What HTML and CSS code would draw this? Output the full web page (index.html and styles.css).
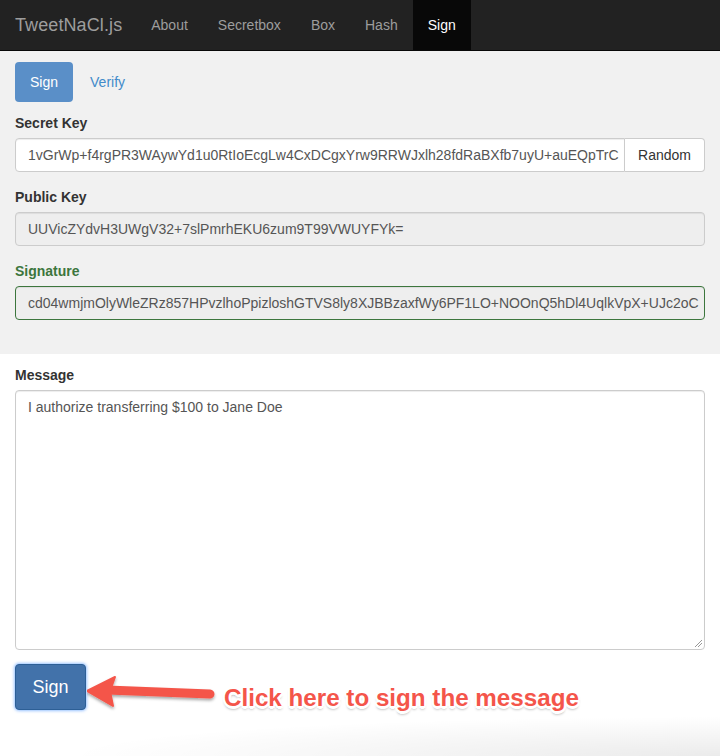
FILE: index.html
```html
<!DOCTYPE html>
<html>
<head>
<meta charset="utf-8">
<title>TweetNaCl.js</title>
<link rel="stylesheet" href="styles.css">
</head>
<body>
<nav class="navbar">
  <a class="brand">TweetNaCl.js</a>
  <ul class="nav">
    <li><a>About</a></li>
    <li><a>Secretbox</a></li>
    <li><a>Box</a></li>
    <li><a>Hash</a></li>
    <li class="active"><a>Sign</a></li>
  </ul>
</nav>
<section class="keys">
  <ul class="pills">
    <li class="active"><a>Sign</a></li>
    <li><a>Verify</a></li>
  </ul>
  <div class="group">
    <label>Secret Key</label>
    <div class="input-group">
      <div class="control">1vGrWp+f4rgPR3WAywYd1u0RtIoEcgLw4CxDCgxYrw9RRWJxlh28fdRaBXfb7uyU+auEQpTrC</div>
      <span class="addon">Random</span>
    </div>
  </div>
  <div class="group">
    <label>Public Key</label>
    <div class="control readonly">UUVicZYdvH3UWgV32+7slPmrhEKU6zum9T99VWUYFYk=</div>
  </div>
  <div class="group success">
    <label>Signature</label>
    <div class="control readonly">cd04wmjmOlyWleZRz857HPvzlhoPpizloshGTVS8ly8XJBBzaxfWy6PF1LO+NOOnQ5hDl4UqlkVpX+UJc2oC</div>
  </div>
</section>
<section class="message">
  <label>Message</label>
  <div class="textarea">I authorize transferring $100 to Jane Doe<svg class="grip" width="9" height="9" viewBox="0 0 9 9"><path d="M1 8 L8 1 M4 8 L8 4" stroke="#999" stroke-width="1" fill="none"/></svg></div>
  <div class="actions">
    <button class="btn-sign">Sign</button>
    <svg class="arrow" width="140" height="50" viewBox="0 0 140 50">
      <defs>
        <filter id="sh" x="-20%" y="-40%" width="140%" height="180%">
          <feDropShadow dx="0" dy="2" stdDeviation="1.5" flood-color="#000" flood-opacity="0.35"/>
        </filter>
      </defs>
      <g filter="url(#sh)" fill="#f4554a" stroke="#f4554a">
        <line x1="20" y1="21" x2="123" y2="25" stroke-width="9" stroke-linecap="round"/>
        <path d="M0 22 L28 8 L23 22 L26 37 Z" stroke-width="2" stroke-linejoin="round"/>
      </g>
    </svg>
    <span class="callout">Click here to sign the message</span>
  </div>
</section>
<div class="corner-shadow"></div>
</body>
</html>
```
FILE: styles.css
```css
* { box-sizing: border-box; }
html, body { margin: 0; padding: 0; }
body {
  width: 720px;
  height: 756px;
  overflow: hidden;
  position: relative;
  font-family: "Liberation Sans", Arial, Helvetica, sans-serif;
  font-size: 14px;
  color: #333;
  background: #fff;
}
.navbar {
  height: 51px;
  background: #222;
  border-bottom: 1px solid #080808;
  display: flex;
  align-items: stretch;
}
.brand {
  padding: 0 15px;
  font-size: 18px;
  line-height: 50px;
  color: #9d9d9d;
  letter-spacing: 0.1px;
}
.nav {
  list-style: none;
  margin: 0;
  padding: 0;
  display: flex;
}
.nav li a {
  display: block;
  padding: 0 15px;
  line-height: 50px;
  color: #9d9d9d;
}
.nav li:first-child a { padding-left: 14px; }
.nav li.active a {
  background: #080808;
  color: #fff;
}
.keys {
  background: #f1f1f1;
  padding: 11px 15px 19px;
}
.pills {
  list-style: none;
  margin: 0 0 11px;
  padding: 0;
  display: flex;
  gap: 2px;
}
.pills li a {
  display: block;
  padding: 10px 15px;
  line-height: 20px;
  border-radius: 4px;
  color: #428bca;
}
.pills li.active a {
  background: #5a8fc8;
  color: #fff;
}
.group { margin-bottom: 15px; }
label {
  display: block;
  font-weight: bold;
  line-height: 20px;
  margin-bottom: 5px;
}
.control {
  height: 34px;
  padding: 6px 12px;
  line-height: 20px;
  border: 1px solid #ccc;
  border-radius: 4px;
  background: #fff;
  color: #555;
  white-space: nowrap;
  overflow: hidden;
  box-shadow: inset 0 1px 1px rgba(0,0,0,.075);
}
.control.readonly { background: #eee; }
.input-group { display: flex; }
.input-group .control {
  flex: 1;
  min-width: 0;
  border-radius: 4px 0 0 4px;
}
.addon {
  width: 80px;
  height: 34px;
  flex: none;
  border: 1px solid #ccc;
  border-left: none;
  border-radius: 0 4px 4px 0;
  background: #fff;
  line-height: 32px;
  text-align: center;
  color: #333;
}
.success label { color: #3c763d; }
.success .control { border-color: #3c763d; }
.message {
  padding: 11px 15px 0;
}
.textarea {
  position: relative;
  height: 260px;
  padding: 6px 12px;
  line-height: 20px;
  border: 1px solid #ccc;
  border-radius: 4px;
  color: #555;
  box-shadow: inset 0 1px 1px rgba(0,0,0,.075);
}
.grip { position: absolute; right: 1px; bottom: 1px; }
.actions {
  position: relative;
  margin-top: 14px;
  display: flex;
  align-items: center;
}
.btn-sign {
  font-family: inherit;
  font-size: 18px;
  line-height: 24px;
  padding: 10px 16px;
  width: 71px;
  border: 1px solid #2d5f96;
  border-radius: 4px;
  background: #4272aa;
  color: #fff;
  box-shadow: 0 0 3px 1px rgba(110,170,255,.7);
}
.arrow {
  position: absolute;
  left: 72px;
  top: 5px;
}
.callout {
  position: absolute;
  left: 209px;
  top: 20px;
  font-size: 24.2px;
  font-weight: bold;
  color: #f4554a;
  text-shadow:
    2px 0 0 #fff, -2px 0 0 #fff, 0 2px 0 #fff, 0 -2px 0 #fff,
    1.5px 1.5px 0 #fff, -1.5px -1.5px 0 #fff, 1.5px -1.5px 0 #fff, -1.5px 1.5px 0 #fff,
    2.5px 0 0 #fff, -2.5px 0 0 #fff, 0 2.5px 0 #fff, 0 -2.5px 0 #fff,
    0 3px 3px rgba(0,0,0,.45);
}
.corner-shadow {
  position: absolute;
  left: 60px;
  right: 0;
  bottom: 0;
  height: 40px;
  background: radial-gradient(ellipse at 100% 100%, rgba(0,0,0,.08), rgba(0,0,0,0) 70%);
  pointer-events: none;
}
```
